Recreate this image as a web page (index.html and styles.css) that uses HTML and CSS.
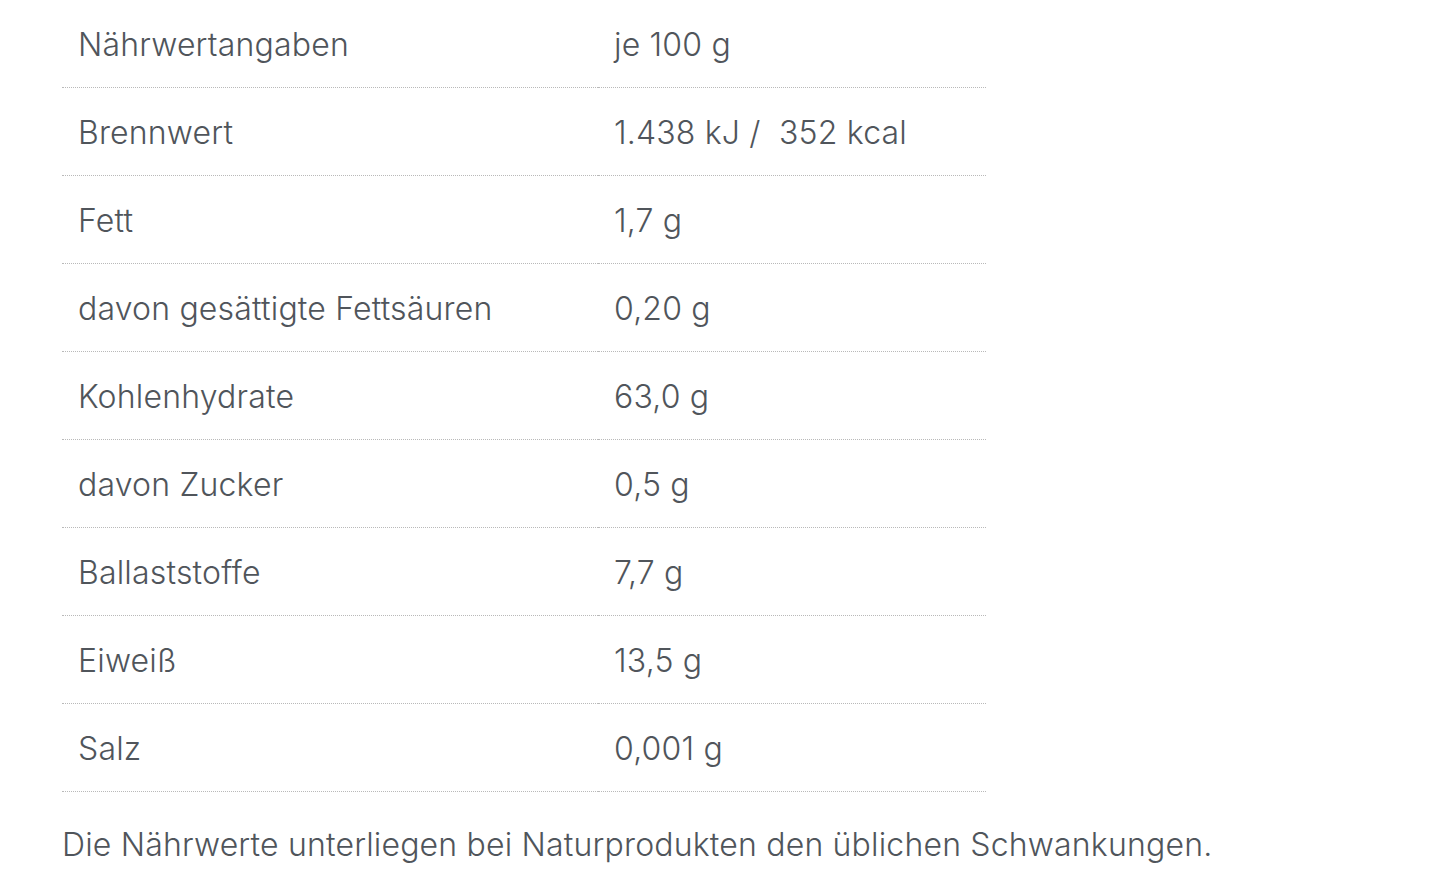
FILE: index.html
```html
<!DOCTYPE html>
<html lang="de">
<head>
<meta charset="utf-8">
<link rel="stylesheet" href="styles.css">
</head>
<body>
<div class="wrap">
  <table class="nutri">
    <tbody>
      <tr><td class="k">Nährwertangaben</td><td class="v">je 100 g</td></tr>
      <tr><td class="k">Brennwert</td><td class="v">1.438 kJ /&nbsp; 352 kcal</td></tr>
      <tr><td class="k">Fett</td><td class="v">1,7 g</td></tr>
      <tr><td class="k">davon gesättigte Fettsäuren</td><td class="v">0,20 g</td></tr>
      <tr><td class="k">Kohlenhydrate</td><td class="v">63,0 g</td></tr>
      <tr><td class="k">davon Zucker</td><td class="v">0,5 g</td></tr>
      <tr><td class="k">Ballaststoffe</td><td class="v">7,7 g</td></tr>
      <tr><td class="k">Eiweiß</td><td class="v">13,5 g</td></tr>
      <tr><td class="k">Salz</td><td class="v">0,001 g</td></tr>
    </tbody>
  </table>
  <p class="note">Die Nährwerte unterliegen bei Naturprodukten den üblichen Schwankungen.</p>
</div>
</body>
</html>
```
FILE: styles.css
```css
html, body {
  margin: 0;
  padding: 0;
  background: #fff;
}
body {
  font-family: Inter, "Liberation Sans", Arial, sans-serif;
  font-weight: 300;
  color: #50555b;
  font-size: 32px;
  letter-spacing: 0.18px;
}
.wrap {
  padding: 0 0 0 62px;
}
.nutri {
  border-collapse: separate;
  border-spacing: 0;
  width: 924px;
}
.nutri td {
  height: 85px;
  padding: 2px 0 0 16px;
  border-bottom: 1px dotted #b9b9b9;
  vertical-align: middle;
  white-space: nowrap;
}
.nutri td.k {
  width: 520px;
}
.note {
  margin: 34px 0 0 0;
  line-height: 38px;
}
```
